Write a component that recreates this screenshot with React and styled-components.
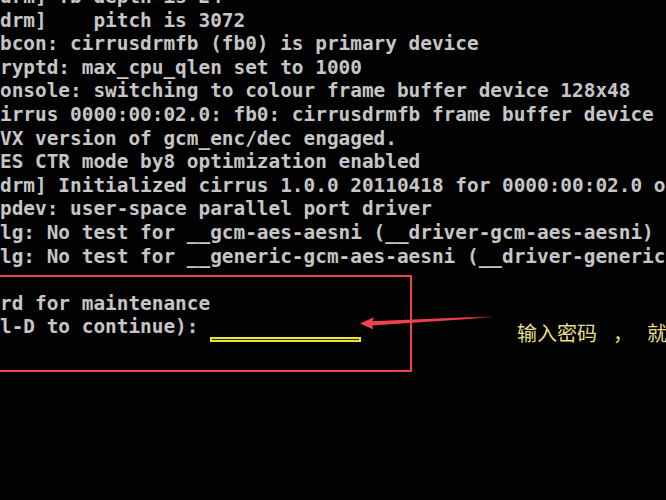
import React from "react";
import styled, { createGlobalStyle } from "styled-components";

const Global = createGlobalStyle`
  html, body { margin: 0; padding: 0; background: #000; }
  #root { width: 666px; height: 500px; }
`;

const Screen = styled.div`
  position: relative;
  width: 666px;
  height: 500px;
  overflow: hidden;
  background: #020202;
`;

const Console = styled.div`
  display: flex;
  flex-direction: column;
  margin-top: -15px;
  padding-left: 0;
  font-family: "DejaVu Sans Mono", "Liberation Mono", monospace;
  font-weight: bold;
  font-size: 19.4px;
  line-height: 23.6px;
  color: #c6c6c6;
  white-space: pre;
`;

const Line = styled.div`
  height: 23.6px;
`;

const RedFrame = styled.div`
  position: absolute;
  left: -10px;
  top: 275px;
  width: 418px;
  height: 93px;
  border: 2px solid #e8474b;
`;

const InputMark = styled.div`
  position: absolute;
  left: 210px;
  top: 337px;
  width: 147px;
  height: 1px;
  border: 2px solid #e6e63a;
  background: #2a2a08;
`;

const ArrowSvg = styled.svg`
  position: absolute;
  left: 0;
  top: 0;
  pointer-events: none;
`;

const Note = styled.div`
  position: absolute;
  left: 517px;
  top: 319px;
  font-family: "Noto Sans CJK SC", "Noto Sans CJK JP", sans-serif;
  font-size: 20px;
  line-height: 28px;
  color: #e4df86;
  white-space: pre;
`;

const Comma = styled.span`
  margin: 0 14px 0 16px;
`;

const lines = [
  "drm] fb depth is 24",
  "drm]    pitch is 3072",
  "bcon: cirrusdrmfb (fb0) is primary device",
  "ryptd: max_cpu_qlen set to 1000",
  "onsole: switching to colour frame buffer device 128x48",
  "irrus 0000:00:02.0: fb0: cirrusdrmfb frame buffer device",
  "VX version of gcm_enc/dec engaged.",
  "ES CTR mode by8 optimization enabled",
  "drm] Initialized cirrus 1.0.0 20110418 for 0000:00:02.0 on minor 0",
  "pdev: user-space parallel port driver",
  "lg: No test for __gcm-aes-aesni (__driver-gcm-aes-aesni)",
  "lg: No test for __generic-gcm-aes-aesni (__driver-generic-gcm-aes-aesni)",
  "",
  "rd for maintenance",
  "l-D to continue):",
];

export default function App() {
  return (
    <>
      <Global />
      <Screen>
        <Console>
          {lines.map((l, i) => (
            <Line key={i}>{l}</Line>
          ))}
        </Console>
        <RedFrame />
        <InputMark />
        <ArrowSvg width="666" height="500" viewBox="0 0 666 500">
          <defs>
            <linearGradient id="fade" x1="360" y1="0" x2="492" y2="0" gradientUnits="userSpaceOnUse">
              <stop offset="0" stopColor="#f0444c" />
              <stop offset="0.8" stopColor="#ee3e48" />
              <stop offset="1" stopColor="#ee3e48" stopOpacity="0.2" />
            </linearGradient>
          </defs>
          <polygon
            points="492,316.2 492,317.6 371,325.4 371,321.2"
            fill="url(#fade)"
          />
          <polygon points="360,323.6 374,317.2 371.5,323.4 373.5,329.6" fill="#f0444c" />
        </ArrowSvg>
        <Note>
          输入密码<Comma>，</Comma>就
        </Note>
      </Screen>
    </>
  );
}
